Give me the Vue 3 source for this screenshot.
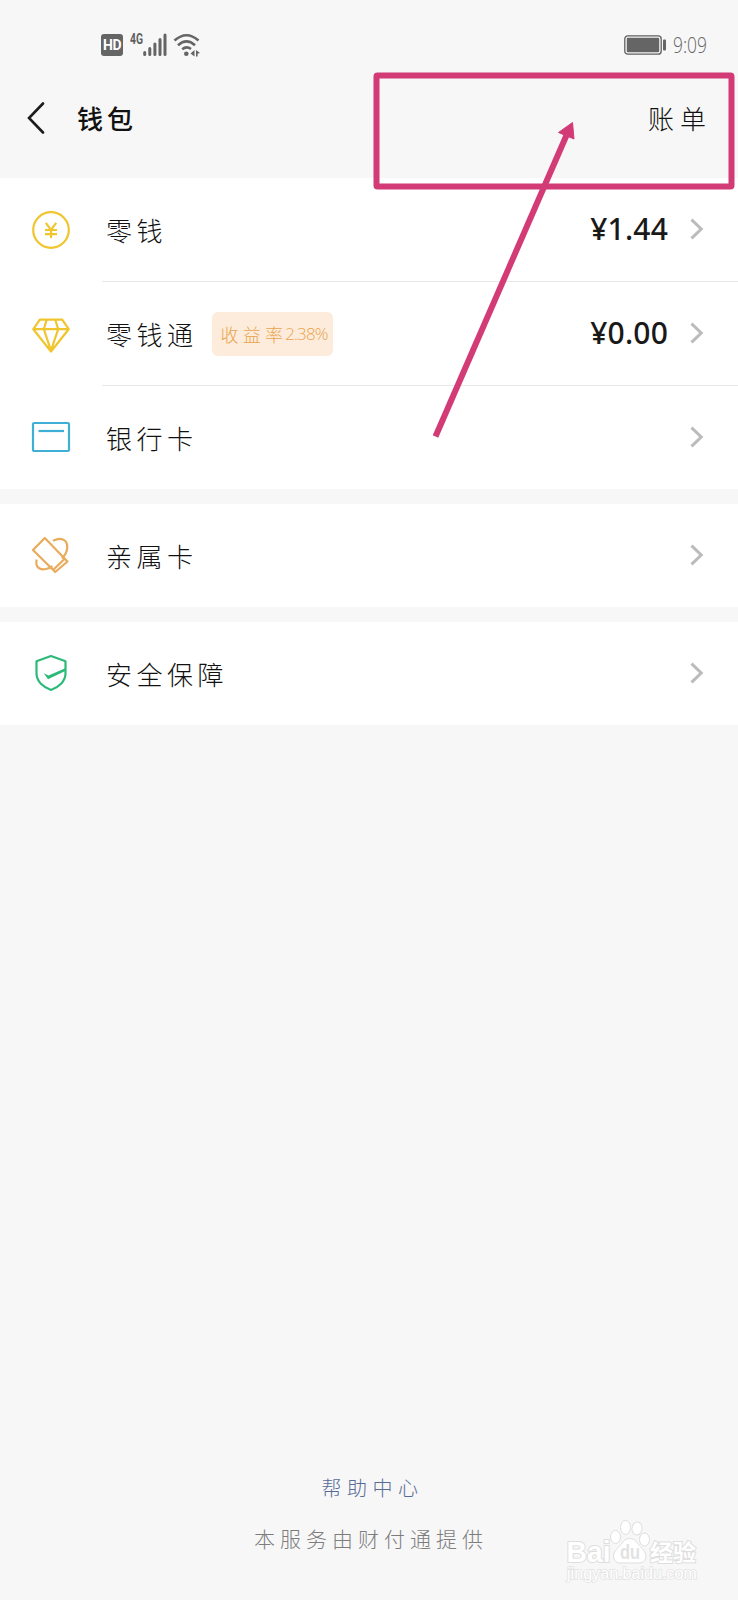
<template>
  <div class="page">
    <div class="status-bar">
      <div class="status-left">
        <span class="hd">HD</span>
        <svg class="net" width="15" height="24" viewBox="0 0 15 24">
          <text x="0" y="18" textLength="13" lengthAdjust="spacingAndGlyphs">4G</text>
        </svg>
        <svg class="signal" width="24" height="24" viewBox="0 0 24 24">
          <path d="M1.7 19.5V21.5M6.8 15.5V21.5M11.9 11V21.5M17 6.5V21.5M22 2V21.5" />
        </svg>
        <svg class="wifi" width="28" height="24" viewBox="0 0 28 24">
          <path d="M1.5 7.5Q13.5-3 25.5 7.5M5 12.2Q13.5 4.5 22 12.2M9.2 16.2Q13.5 12.6 18 16" />
          <circle cx="13.3" cy="20.7" r="2.3" />
          <path class="solid" d="M17.5 20.5L21.5 17V23.5ZM23 17L27 20L24.6 20.7V23.5H23Z" />
        </svg>
      </div>
      <div class="status-right">
        <svg width="43" height="20" viewBox="0 0 43 20">
          <rect x="0.8" y="0.8" width="36.4" height="18.4" rx="3" fill="none" stroke="#5f5f5f" stroke-width="1.3" />
          <rect x="2.8" y="2.8" width="32.4" height="14.4" rx="1" fill="#656565" />
          <rect x="39" y="4.5" width="3" height="11" rx="1" fill="#656565" />
        </svg>
        <svg class="clock" width="36" height="36" viewBox="0 0 36 36">
          <text x="0" y="26" textLength="34" lengthAdjust="spacingAndGlyphs">9:09</text>
        </svg>
      </div>
    </div>

    <div class="nav-bar">
      <svg class="back" width="18" height="32" viewBox="0 0 18 32">
        <path d="M16 1.5L2 16L16 30.5" />
      </svg>
      <span class="title">钱包</span>
      <span class="bill">账单</span>
    </div>

    <div v-for="(group, index) in groups" :key="index" class="group">
      <div v-for="item in group" :key="item.id" class="row">
        <div class="row-icon">
          <svg width="40" height="40" viewBox="0 0 40 40" :class="item.id">
            <template v-if="item.id === 'change'">
              <circle cx="20" cy="20" r="17.8" />
              <path d="M14.8 12.8L20 19.8L25.2 12.8M20 19.8V28M14 20H26M14 24.2H26" />
            </template>
            <template v-else-if="item.id === 'fund'">
              <path d="M8.8 5.7H31.2L37.7 15.2L20 37.5L2.3 15.2ZM2.3 15.2H37.7M15.7 5.7L12.8 15.2L20 36.5L27.2 15.2L24.3 5.7" />
            </template>
            <template v-else-if="item.id === 'bank'">
              <rect x="2" y="6" width="36" height="28" rx="1.2" />
              <path d="M7.5 14H33" />
            </template>
            <template v-else-if="item.id === 'family'">
              <path d="M13.8 3L36.5 26.5L24.2 37L2 15Z" />
              <path d="M22 5.8C30 1.8 37 4.5 36.2 13C36 17.5 33.5 20.8 31 23.5M5.7 24.5C4 32 8.5 35.5 15 34C18 33.5 20 32.5 21.5 31.2M33.5 24L22 35" />
            </template>
            <template v-else>
              <path d="M20 3L34.5 8.2V20.5C34.5 28.5 27.5 34.3 20 37C12.5 34.3 5.5 28.5 5.5 20.5V8.2Z" />
              <path class="check" d="M12.8 20.2L17.5 22.5L34.8 15V17.8L17 26.2Z" />
            </template>
          </svg>
        </div>
        <div class="row-main">
          <span class="label">{{ item.label }}</span>
          <span v-if="item.rate" class="tag">收益率<span class="rate">{{ item.rate }}</span></span>
          <span class="amount">{{ item.amount }}</span>
          <svg class="arrow" width="14" height="22" viewBox="0 0 14 22">
            <path d="M1.5 1.7L11.2 11L1.5 20.3" />
          </svg>
        </div>
      </div>
    </div>

    <div class="footer">
      <span class="help">帮助中心</span>
      <span class="provider">本服务由财付通提供</span>
    </div>

    <svg class="mark" width="738" height="460" viewBox="0 0 738 460">
      <rect x="376.5" y="75.5" width="355" height="111" rx="1" />
      <path d="M435.5 436.5L567.5 133" />
      <path class="head" d="M572.5 122.5L574 139L558.5 132.5Z" />
    </svg>

    <svg class="watermark" width="140" height="72" viewBox="0 0 140 72">
      <g class="paw">
        <ellipse cx="50.5" cy="22" rx="5" ry="6.5" />
        <ellipse cx="60.5" cy="12.5" rx="5" ry="7" />
        <ellipse cx="72" cy="13.5" rx="5" ry="6.5" transform="rotate(8 72 13.5)" />
        <ellipse cx="79.5" cy="24.5" rx="5" ry="6.5" />
        <path d="M64.5 23.5C58.5 23.5 57 29 51.5 34.5C46 40 48.5 48 55 48H74C81 48 83.5 40.5 78 34.5C72 28.5 71 23.5 64.5 23.5Z" />
      </g>
      <text x="1.5" y="46.5" class="big" textLength="44" lengthAdjust="spacingAndGlyphs">Bai</text>
      <text x="55" y="44" class="du" textLength="20" lengthAdjust="spacingAndGlyphs">du</text>
      <text x="85" y="45.5" class="cn" textLength="46" lengthAdjust="spacingAndGlyphs">经验</text>
      <text x="2" y="64" class="url" textLength="130" lengthAdjust="spacingAndGlyphs">jingyan.baidu.com</text>
    </svg>
  </div>
</template>

<script setup>
const groups = [
  [
    { id: 'change', label: '零钱', amount: '¥1.44' },
    { id: 'fund', label: '零钱通', rate: '2.38%', amount: '¥0.00' },
    { id: 'bank', label: '银行卡' }
  ],
  [{ id: 'family', label: '亲属卡' }],
  [{ id: 'safe', label: '安全保障' }]
]
</script>

<style>
body {
  background: #f7f7f7;
}
</style>

<style scoped>
.page {
  position: relative;
  display: flex;
  flex-direction: column;
  width: 738px;
  height: 1600px;
  overflow: hidden;
  box-sizing: border-box;
  background: #f7f7f7;
  color: #111;
  font-family: 'Noto Sans', 'Noto Sans CJK SC', sans-serif;
}

.status-bar {
  display: flex;
  justify-content: space-between;
  height: 58px;
  padding: 33px 29px 0 101px;
  box-sizing: border-box;
}

.status-left {
  display: flex;
  align-items: flex-start;
}

.hd {
  width: 22px;
  height: 22px;
  margin-top: 1px;
  border-radius: 3px;
  background: #656565;
  color: #fff;
  font: bold 14px/22px Roboto, sans-serif;
  text-align: center;
  letter-spacing: -0.6px;
}

.net {
  margin: -7px -2px 0 7px;
}

.net text {
  fill: #5f5f5f;
  font: bold 14px Roboto, sans-serif;
}

.signal path {
  fill: none;
  stroke: #656565;
  stroke-width: 3;
  stroke-linecap: round;
}

.wifi {
  margin-left: 6px;
}

.wifi path {
  fill: none;
  stroke: #656565;
  stroke-width: 2.6;
}

.wifi circle,
.wifi .solid {
  fill: #656565;
  stroke: none;
}

.status-right {
  display: flex;
  align-items: flex-start;
  padding-top: 2px;
}

.clock {
  margin-top: -8px;
  margin-left: 6px;
}

.clock text {
  fill: #666;
  font: 300 22px 'Open Sans', sans-serif;
}

.nav-bar {
  display: flex;
  align-items: center;
  height: 120px;
  padding: 0 26px 0 27px;
  box-sizing: border-box;
}

.back path {
  fill: none;
  stroke: #1c1c1c;
  stroke-width: 2.6;
  stroke-linecap: round;
}

.title {
  margin-left: 32px;
  font-size: 26px;
  font-weight: 500;
  letter-spacing: 4px;
}

.bill {
  margin-left: auto;
  font-size: 26px;
  font-weight: 300;
  letter-spacing: 6px;
}

.group {
  background: #fff;
}

.group + .group {
  margin-top: 15px;
}

.row {
  display: flex;
  height: 104px;
}

.row:last-child {
  height: 103px;
}

.row-icon {
  display: flex;
  align-items: center;
  width: 102px;
  padding-bottom: 1px;
  padding-left: 31px;
  box-sizing: border-box;
}

.row-icon path,
.row-icon circle,
.row-icon rect {
  fill: none;
  stroke: currentColor;
  stroke-width: 2.2;
  stroke-linejoin: round;
}

.change,
.fund {
  color: #f0c52e;
}

.bank {
  color: #3fafd5;
}

.family {
  color: #eaab5c;
}

.safe {
  color: #2dba78;
}

.row-icon .check {
  fill: currentColor;
  stroke: none;
}

.row-main {
  flex: 1;
  display: flex;
  align-items: center;
  padding-right: 34px;
  padding-left: 4px;
  border-bottom: 1px solid #e8e8e8;
}

.row:last-child .row-main {
  border-bottom: none;
}

.label {
  font-size: 26px;
  font-weight: 300;
  letter-spacing: 4.5px;
}

.tag {
  display: flex;
  align-items: center;
  width: 121px;
  height: 44px;
  margin-left: 14px;
  padding-left: 9px;
  box-sizing: border-box;
  border-radius: 6px;
  background: #fdecdb;
  color: #e9a44e;
  font-size: 18px;
  font-weight: 300;
  letter-spacing: 4.2px;
  white-space: nowrap;
}

.rate {
  margin-left: -2px;
  font-family: 'Open Sans', sans-serif;
  font-size: 17px;
  letter-spacing: -0.9px;
}

.amount {
  margin-left: auto;
  padding-bottom: 2px;
  color: #191919;
  font-size: 30px;
  font-weight: 500;
  letter-spacing: 0.2px;
}

.arrow {
  margin-bottom: 1px;
  margin-left: 22px;
}

.arrow path {
  fill: none;
  stroke: #bbb;
  stroke-width: 3;
}

.footer {
  display: flex;
  flex-direction: column;
  align-items: center;
  gap: 20px;
  margin-top: auto;
  padding-bottom: 46px;
  font-weight: 300;
  line-height: 30px;
}

.help {
  padding-left: 7px;
  color: #576b95;
  font-size: 20px;
  letter-spacing: 5.5px;
}

.provider {
  padding-left: 4px;
  color: #7d7d7d;
  font-size: 21px;
  letter-spacing: 5px;
}

/* annotation drawn over the nav bar and the first rows */
.mark {
  position: absolute;
  top: 0;
  left: 0;
  pointer-events: none;
}

.mark rect,
.mark path {
  fill: none;
  stroke: #d33b76;
  stroke-width: 6;
  stroke-linejoin: round;
}

.mark .head {
  fill: #d33b76;
  stroke-width: 1;
}

.watermark {
  position: absolute;
  top: 1515px;
  left: 565px;
}

.watermark text,
.paw {
  fill: #fff;
  stroke: #dedede;
  stroke-width: 1;
}

.watermark text {
  paint-order: stroke;
  stroke-width: 2;
}

.big {
  font: bold 29px 'Liberation Sans', sans-serif;
}

.watermark .du {
  fill: #e2e2e2;
  stroke: none;
  font: bold 20px 'Liberation Sans', sans-serif;
}

.cn {
  font: bold 23px 'Noto Sans CJK SC', sans-serif;
}

.watermark .url {
  stroke: #e2e2e2;
  stroke-width: 1.5;
  font: 16px 'Liberation Sans', sans-serif;
}
</style>
